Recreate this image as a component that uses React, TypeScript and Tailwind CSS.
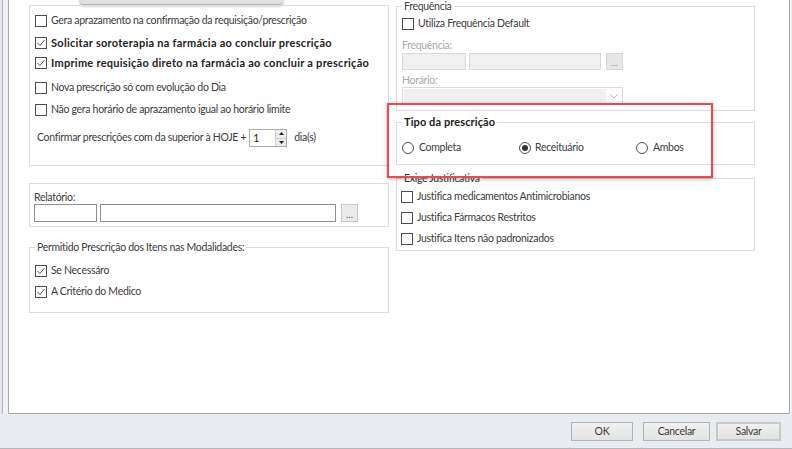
import type { ReactNode } from "react";

const font = { fontFamily: "Lato, 'Liberation Sans', sans-serif" };
const txt = "text-[10.5px] tracking-[-0.3px] text-[#3c3c3c]";
const txtBold = "text-[11px] font-bold tracking-[0.27px] text-[#222]";

const CheckBox = ({ checked = false }: { checked?: boolean }) => (
    <span className="w-[12px] h-[12px] border border-[#4d4d4d] bg-white flex items-center justify-center shrink-0">
        {checked && (
            <svg width="10" height="10" viewBox="0 0 10 10">
                <path d="M1.5 5 L4 7.5 L8.5 2" fill="none" stroke="#555" strokeWidth="1" />
            </svg>
        )}
    </span>
);

const Radio = ({ checked = false }: { checked?: boolean }) => (
    <span className="w-[12px] h-[12px] rounded-full border border-[#4d4d4d] bg-white flex items-center justify-center shrink-0">
        {checked && <span className="w-[6px] h-[6px] rounded-full bg-[#333]" />}
    </span>
);

type GroupBoxProps = {
    title?: string
    bold?: boolean
    className?: string
    children?: ReactNode
}

const GroupBox = ({ title, bold, className = "", children }: GroupBoxProps) => (
    <div className={`relative border border-[#dcdcdc] ${className}`}>
        {title && (
            <span className={`absolute left-[5px] -top-[8px] bg-white px-[2px] leading-[14px] ${bold ? "text-[11px] font-bold tracking-[0.1px] text-[#222]" : txt}`}>
                {title}
            </span>
        )}
        {children}
    </div>
);

const CheckRow = ({ label, checked, bold, className = "" }: { label: string; checked?: boolean; bold?: boolean; className?: string }) => (
    <div className={`flex items-center gap-[4px] h-[20px] ${className}`}>
        <CheckBox checked={checked} />
        <span className={`whitespace-nowrap ${bold ? txtBold : txt}`}>{label}</span>
    </div>
);

const Button = ({ label, isDefault, className = "" }: { label: string; isDefault?: boolean; className?: string }) => (
    <button
        className={`h-[19px] flex items-center justify-center ${txt} bg-gradient-to-b from-[#f0f0f0] to-[#e3e3e3] ${isDefault ? "border-2 border-[#c8c8c8]" : "border border-[#b3b3b3]"} ${className}`}
    >
        {label}
    </button>
);

export default function App() {
    return (
        <div style={font} className="w-[792px] h-[449px] bg-[#e8ebef] flex flex-col border-b border-[#b4b4b4] overflow-hidden">
            <div className="flex h-[414px]">
                <div className="w-[2px] bg-[#e2e5e9]" />
                <div className="w-px bg-[#b3b6ba]" />
                <div className="w-[5px] bg-[#eef0f3]" />
                <div className="flex-1 relative bg-white border-l border-r border-b border-[#a9a9a9] pl-[20px] pt-[5px] flex gap-[7px]">
                    {/* sombra no topo */}
                    <div className="absolute left-[71px] -top-[10px] w-[203px] h-[14px] rounded-[4px] bg-[#e1e1e1] shadow-[0_2px_3px_rgba(0,0,0,0.35)]" />

                    {/* coluna esquerda */}
                    <div className="w-[360px] flex flex-col">
                        <GroupBox className="h-[161px] pl-[5px]">
                            <CheckRow className="mt-[5px]" label="Gera aprazamento na confirmação da requisição/prescrição" />
                            <CheckRow className="mt-[2px]" checked bold label="Solicitar soroterapia na farmácia ao concluir prescrição" />
                            <CheckRow checked bold label="Imprime requisição direto na farmácia ao concluir a prescrição" />
                            <CheckRow className="mt-[5px]" label="Nova prescrição só com evolução do Dia" />
                            <CheckRow className="mt-[2px]" label="Não gera horário de aprazamento igual ao horário limite" />
                            <div className={`mt-[8px] h-[20px] flex items-center pl-[2px] ${txt}`}>
                                <span className="whitespace-nowrap">Confirmar prescrições com da superior à HOJE +</span>
                                <div className="ml-[3px] w-[38px] h-[18px] border border-[#acacac] flex items-stretch">
                                    <span className="flex-1 pl-[3px] leading-[16px] text-[#222]">1</span>
                                    <div className="w-[11px] flex flex-col border-l border-[#d0d0d0] bg-[#ececec]">
                                        <div className="flex-1 flex items-center justify-center border-b border-[#d0d0d0]">
                                            <svg width="5" height="3" viewBox="0 0 5 3"><path d="M0 3 L2.5 0 L5 3Z" fill="#222" /></svg>
                                        </div>
                                        <div className="flex-1 flex items-center justify-center">
                                            <svg width="5" height="3" viewBox="0 0 5 3"><path d="M0 0 L2.5 3 L5 0Z" fill="#222" /></svg>
                                        </div>
                                    </div>
                                </div>
                                <span className="ml-[7px]">dia(s)</span>
                            </div>
                        </GroupBox>

                        <GroupBox className="mt-[17px] h-[44px] pl-[4px]">
                            <div className={`mt-[6px] leading-[14px] ${txt}`}>Relatório:</div>
                            <div className="flex items-center">
                                <div className="w-[63px] h-[18px] border border-[#8f8f8f] bg-white" />
                                <div className="ml-[3px] w-[236px] h-[18px] border border-[#8f8f8f] bg-white" />
                                <div className="ml-[5px] w-[17px] h-[18px] border border-[#c9c9c9] bg-[#ebebeb] flex items-end justify-center text-[10px] leading-[13px] text-[#555]">...</div>
                            </div>
                        </GroupBox>

                        <GroupBox title="Permitido Prescrição dos Itens nas Modalidades:" className="mt-[20px] h-[66px] pl-[5px]">
                            <CheckRow className="mt-[13px]" checked label="Se Necessáro" />
                            <CheckRow className="mt-[1px]" checked label="A Critério do Medico" />
                        </GroupBox>
                    </div>

                    {/* coluna direita */}
                    <div className="w-[359px] flex flex-col mt-[1px]">
                        <GroupBox title="Frequência" className="h-[105px] pl-[5px]">
                            <CheckRow className="mt-[7px]" label="Utiliza Frequência Default" />
                            <div className="mt-[4px] text-[10.5px] tracking-[-0.3px] leading-[14px] text-[#aaaaaa]">Frequência:</div>
                            <div className="flex mt-[1px]">
                                <div className="w-[64px] h-[17px] border border-[#dadada] bg-[#f0f0f0]" />
                                <div className="ml-[3px] w-[132px] h-[17px] border border-[#dadada] bg-[#f0f0f0]" />
                                <div className="ml-[5px] w-[17px] h-[17px] border border-[#d6d6d6] bg-[#e6e6e6] flex items-end justify-center text-[9px] leading-[12px] text-[#999]">...</div>
                            </div>
                            <div className="mt-[3px] text-[10.5px] tracking-[-0.3px] leading-[14px] text-[#aaaaaa]">Horário:</div>
                            <div className="w-[221px] h-[18px] border border-[#dadada] bg-white flex p-[1px]">
                                <div className="w-[202px] bg-[#f0f0f0]" />
                                <div className="flex-1 flex items-center justify-center">
                                    <svg width="8" height="5" viewBox="0 0 8 5"><path d="M0.5 0.5 L4 4 L7.5 0.5" fill="none" stroke="#b5b5b5" strokeWidth="1" /></svg>
                                </div>
                            </div>
                        </GroupBox>

                        <GroupBox title="Tipo da prescrição" bold className="mt-[11px] h-[43px] pl-[5px]">
                            <div className={`mt-[17px] flex items-center ${txt}`}>
                                <div className="w-[117px] flex items-center gap-[5px]"><Radio />Completa</div>
                                <div className="w-[117px] flex items-center gap-[4px]"><Radio checked />Receituário</div>
                                <div className="flex items-center gap-[5px]"><Radio />Ambos</div>
                            </div>
                        </GroupBox>

                        <GroupBox title="Exige Justificativa" className="mt-[13px] h-[73px] pl-[4px]">
                            <CheckRow className="mt-[8px]" label="Justifica medicamentos Antimicrobianos" />
                            <CheckRow className="mt-[1px]" label="Justifica Fármacos Restritos" />
                            <CheckRow className="mt-[1px]" label="Justifica Itens não padronizados" />
                        </GroupBox>
                    </div>

                    {/* destaque vermelho */}
                    <div className="absolute left-[378px] top-[103px] w-[326px] h-[75px] border-2 border-[#ec4a50] shadow-[0_1px_4px_rgba(0,0,0,0.3)]" />
                </div>
                <div className="w-[2px] bg-[#eef0f3]" />
            </div>

            <div className="flex-1 flex items-center justify-end pr-[11px] pt-[1px]">
                <Button label="OK" className="w-[62px]" />
                <Button label="Cancelar" className="ml-[10px] w-[67px]" />
                <Button label="Salvar" isDefault className="ml-[6px] w-[65px]" />
            </div>
        </div>
    );
}
